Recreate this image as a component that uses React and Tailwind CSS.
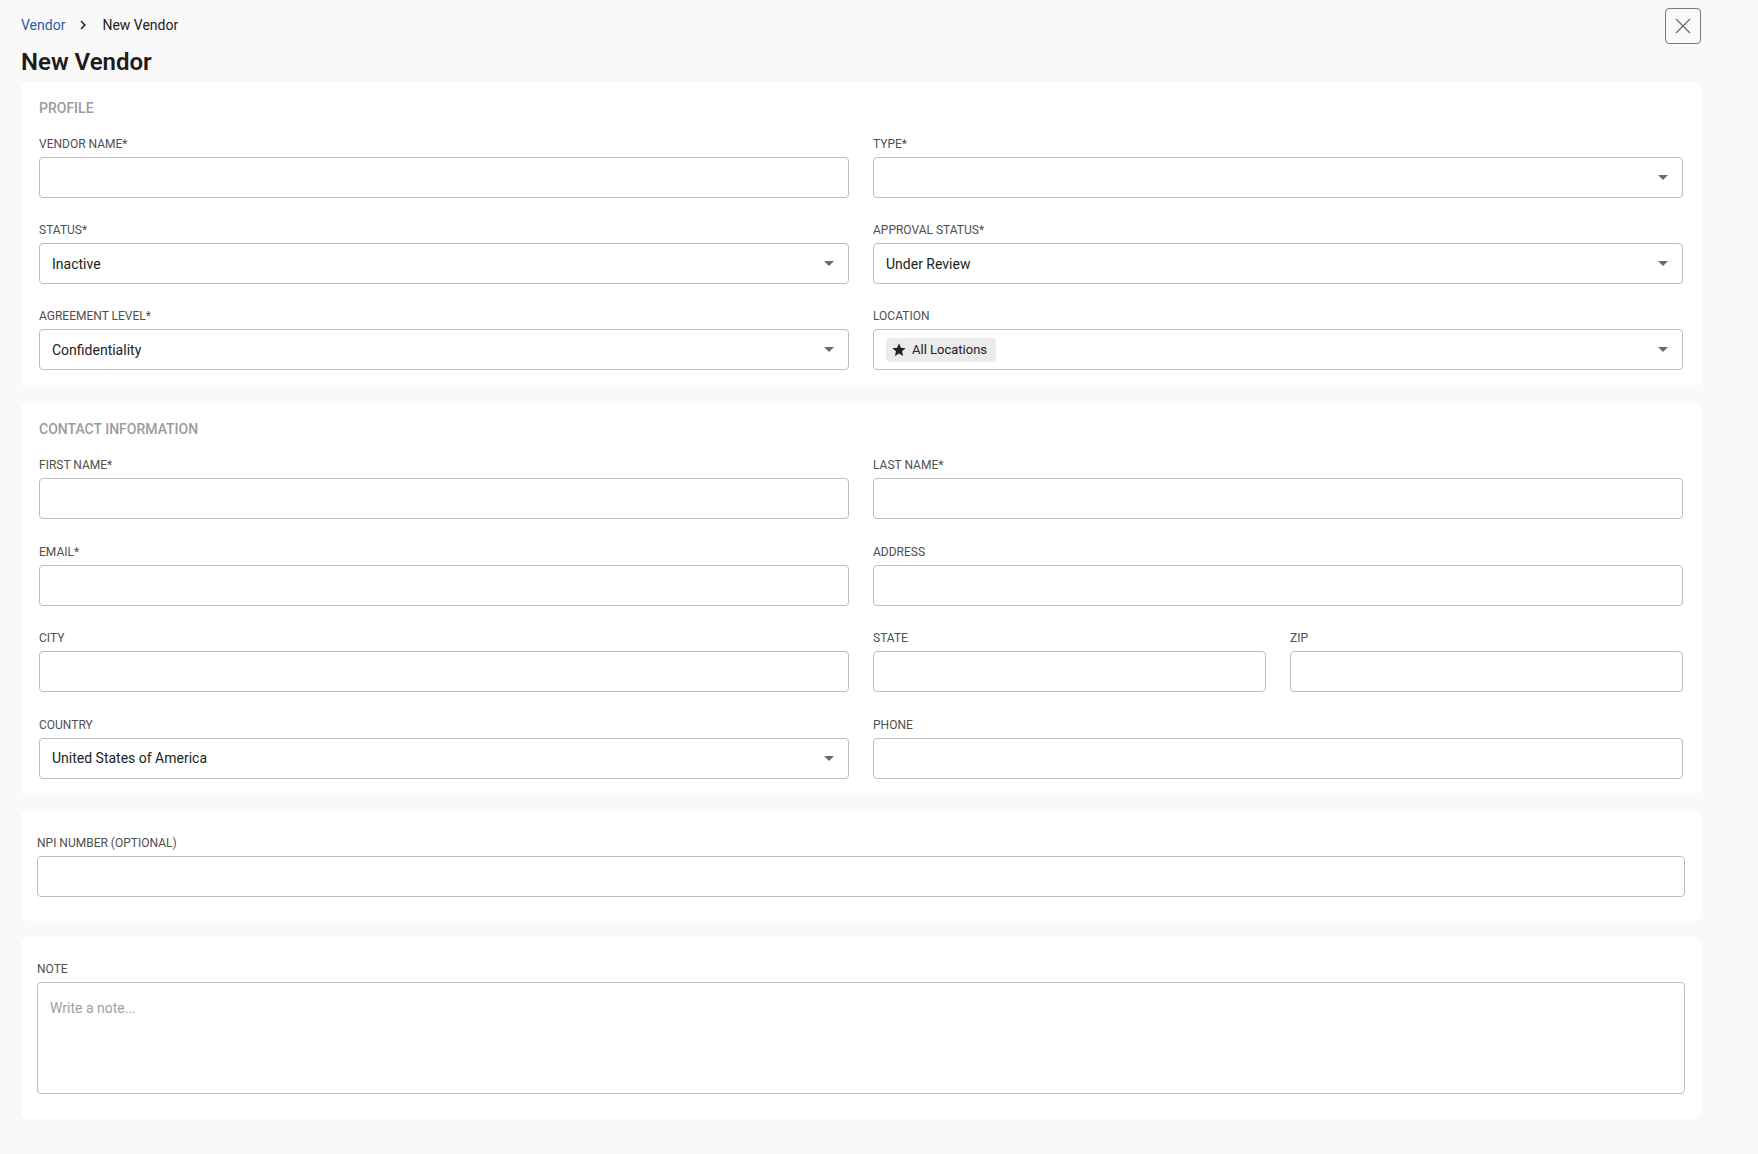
import React from "react";

const Caret = () => (
  <svg width="10" height="5" viewBox="0 0 10 5" className="shrink-0">
    <path d="M0 0L5 5L10 0Z" fill="#6b6b6b" />
  </svg>
);

const Label = ({ children }) => (
  <div className="mb-[6px] text-xs leading-[14px] uppercase text-[#4f4f4f]">{children}</div>
);

const TextField = ({ label }) => (
  <div>
    <Label>{label}</Label>
    <input
      type="text"
      className="block h-[41px] w-full rounded border border-[#bdbdbd] bg-white px-3 text-sm text-[#222] outline-none"
    />
  </div>
);

const SelectField = ({ label, value, children }) => (
  <div>
    <Label>{label}</Label>
    <div className="flex h-[41px] w-full items-center justify-between rounded border border-[#bdbdbd] bg-white pl-3 pr-[14px]">
      {children ? children : <span className="text-sm text-[#222]">{value}</span>}
      <Caret />
    </div>
  </div>
);

const Card = ({ title, children, className = "" }) => (
  <div className={`rounded-md bg-white ${className}`}>
    {title && (
      <h2 className="mb-[21px] text-sm font-medium leading-4 uppercase text-[#9b9b9b]">{title}</h2>
    )}
    {children}
  </div>
);

export default function App() {
  return (
    <div
      className="min-h-screen bg-[#f9f9f9] pl-[21px] pb-8"
      style={{ fontFamily: "Roboto, 'Noto Sans', sans-serif" }}
    >
      <div className="w-[1680px]">
        <div className="flex items-start justify-between">
          <div className="pt-[15px]">
            <nav className="flex h-5 items-center text-sm">
              <span className="text-[#2a5caa]">Vendor</span>
              <svg width="18" height="18" viewBox="0 0 24 24" className="ml-[9px] mr-[10px]">
                <path d="M10 6L8.59 7.41 13.17 12l-4.58 4.59L10 18l6-6z" fill="#222" />
              </svg>
              <span className="text-[#222]">New Vendor</span>
            </nav>
            <h1 className="mt-[11px] text-2xl leading-8 font-semibold text-[#1c1c1c]">New Vendor</h1>
          </div>
          <button className="mt-2 flex h-9 w-9 items-center justify-center rounded border border-[#7a7a7a] bg-transparent">
            <svg width="16" height="16" viewBox="0 0 16 16">
              <path d="M1 1L15 15M15 1L1 15" stroke="#6f6f6f" strokeWidth="1.4" />
            </svg>
          </button>
        </div>

        <div className="mt-1 flex flex-col gap-4">
          <Card title="Profile" className="px-[18px] pt-[18px] pb-[17px]">
            <div className="grid grid-cols-2 gap-x-6 gap-y-[25px]">
              <TextField label="Vendor Name*" />
              <SelectField label="Type*" value="" />
              <SelectField label="Status*" value="Inactive" />
              <SelectField label="Approval Status*" value="Under Review" />
              <SelectField label="Agreement Level*" value="Confidentiality" />
              <SelectField label="Location">
                <span className="flex h-6 items-center gap-[5px] rounded bg-[#ebebeb] pl-[5px] pr-[9px] text-[13px] text-[#222]">
                  <svg width="16" height="16" viewBox="0 0 24 24">
                    <path
                      d="M12 17.27L18.18 21l-1.64-7.03L22 9.24l-7.19-.61L12 2 9.19 8.63 2 9.24l5.46 4.73L5.82 21z"
                      fill="#222"
                    />
                  </svg>
                  All Locations
                </span>
              </SelectField>
            </div>
          </Card>

          <Card title="Contact Information" className="px-[18px] pt-[18px] pb-4">
            <div className="grid grid-cols-2 gap-x-6 gap-y-[25.5px]">
              <TextField label="First Name*" />
              <TextField label="Last Name*" />
              <TextField label="Email*" />
              <TextField label="Address" />
              <TextField label="City" />
              <div className="grid grid-cols-2 gap-6">
                <TextField label="State" />
                <TextField label="Zip" />
              </div>
              <SelectField label="Country" value="United States of America" />
              <TextField label="Phone" />
            </div>
          </Card>

          <Card className="px-4 pt-[25px] pb-6">
            <TextField label="NPI Number (optional)" />
          </Card>

          <Card className="px-4 pt-[25px] pb-[25px]">
            <Label>Note</Label>
            <textarea
              placeholder="Write a note..."
              className="block h-[112px] w-full resize-none rounded border border-[#bdbdbd] bg-white px-3 py-[15px] text-sm leading-5 text-[#222] outline-none placeholder:text-[#a0a0a0]"
            />
          </Card>
        </div>
      </div>
    </div>
  );
}
